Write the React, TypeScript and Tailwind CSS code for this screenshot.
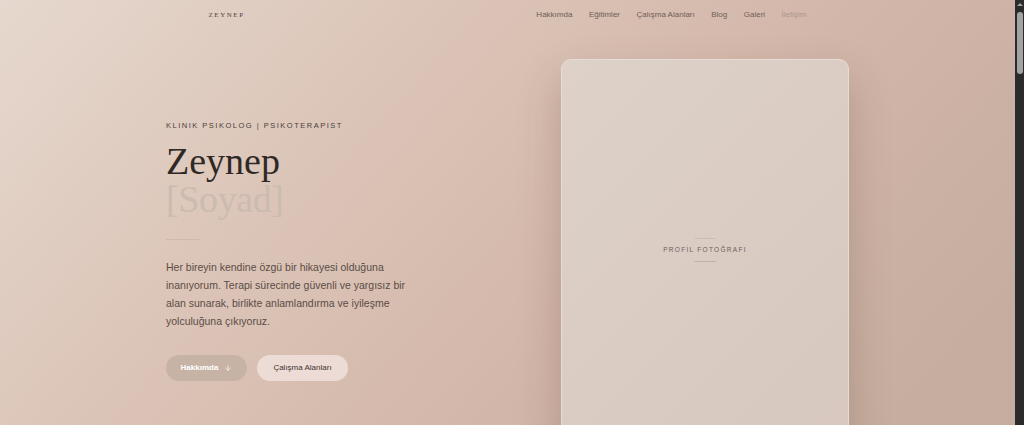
import { ArrowDown } from 'lucide-react';

const links = ['Hakkımda', 'Eğitimler', 'Çalışma Alanları', 'Blog', 'Galeri'];

export default function App() {
  return (
    <div className="flex h-[425px] overflow-hidden font-['Liberation_Sans',Arial,sans-serif]">
      <div className="h-[425px] flex-1 overflow-hidden bg-[linear-gradient(132deg,#e6d8ce_0%,#dcc6b9_30%,#d2b6a9_62%,#c5ad9f_92%)]">
        {/* top navigation */}
        <nav className="mx-auto flex h-[30px] w-[598px] items-center justify-between">
          <span className="font-['Liberation_Serif',serif] text-[7px] tracking-[0.22em] text-[#4d4440]">ZEYNEP</span>
          <ul className="flex items-center gap-[16.5px] text-[8px] text-[#6e5e57]">
            {links.map((l) => (
              <li key={l}>{l}</li>
            ))}
            <li className="text-[#ad968c]">İletişim</li>
          </ul>
        </nav>

        {/* hero */}
        <section className="mx-auto flex w-[683px] justify-between pt-[29px]">
          <div className="w-[260px] pt-[61px]">
            <p className="text-[7.5px] tracking-[0.2em] text-[#4a3f3b]">KLINIK PSIKOLOG | PSIKOTERAPIST</p>
            <h1 className="mt-[11px] font-['Liberation_Serif',serif] text-[38px] leading-[38px] text-[#2f2926]">
              <span className="block">Zeynep</span>
              <span className="block tracking-[-0.01em] text-[#cbbbb1]">[Soyad]</span>
            </h1>
            <div className="mt-[21px] h-px w-[34px] bg-[#cdb9ae]" />
            <p className="mt-[18px] w-[250px] text-[10.5px] leading-[18px] text-[#5b4c46]">
              Her bireyin kendine özgü bir hikayesi olduğuna inanıyorum. Terapi sürecinde güvenli ve yargısız bir alan
              sunarak, birlikte anlamlandırma ve iyileşme yolculuğuna çıkıyoruz.
            </p>
            <div className="mt-[25px] flex gap-[10px]">
              <button className="flex h-[26px] w-[81px] items-center justify-center gap-[6px] rounded-full bg-[#c7b3a6] text-[8px] font-bold text-white">
                Hakkımda <ArrowDown size={8} strokeWidth={2} />
              </button>
              <button className="h-[26px] w-[91px] rounded-full bg-[#ecdcd5] text-[8px] text-[#3f3430]">
                Çalışma Alanları
              </button>
            </div>
          </div>

          {/* portrait placeholder */}
          <div className="flex h-[432px] w-[288px] items-center justify-center rounded-[10px] border border-[#e6dcd5] bg-[linear-gradient(135deg,#ddd1c8_0%,#d7c7be_100%)] shadow-[0_20px_40px_rgba(90,60,45,0.25)]">
            <div className="-mt-[50px] flex flex-col items-center">
              <div className="h-px w-[20px] bg-[#c9bdb2]" />
              <span className="my-[8px] text-[6.5px] leading-[6px] tracking-[0.2em] text-[#6b605b]">PROFİL FOTOĞRAFI</span>
              <div className="h-px w-[22px] bg-[#b7b5a6]" />
            </div>
          </div>
        </section>
      </div>

      {/* page scrollbar */}
      <div className="flex w-[9px] flex-col items-center bg-[#2b2b2b]">
        <div className="mt-[3px] h-0 w-0 border-x-[3px] border-b-[3px] border-x-transparent border-b-[#a3a3a3]" />
        <div className="mt-[6px] h-[62px] w-[6px] rounded-full bg-[#a3a3a3]" />
      </div>
    </div>
  );
}
